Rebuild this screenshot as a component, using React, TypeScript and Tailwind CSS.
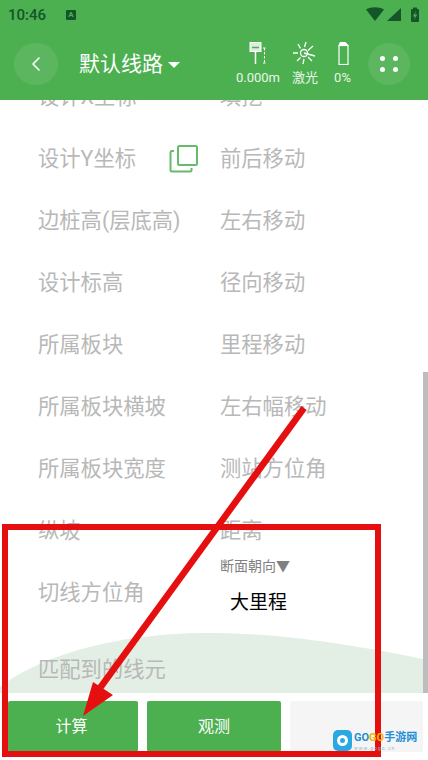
import React from 'react';
import { ChevronLeft } from 'lucide-react';

const rows = [
  { left: '设计X坐标', right: '填挖' },
  { left: '设计Y坐标', right: '前后移动', copy: true },
  { left: '边桩高(层底高)', right: '左右移动' },
  { left: '设计标高', right: '径向移动' },
  { left: '所属板块', right: '里程移动' },
  { left: '所属板块横坡', right: '左右幅移动' },
  { left: '所属板块宽度', right: '测站方位角' },
  { left: '纵坡', right: '距离' },
];

const StatusBar = () => (
  <div className="flex h-[30px] items-center pl-2 pr-2 text-[#14562a]">
    <span className="w-[58px] text-[15px] font-medium">10:46</span>
    <span className="flex h-[10px] w-[10px] items-center justify-center rounded-[1px] bg-[#14562a] text-[8px] font-bold leading-none text-[#4caf50]">A</span>
    <svg className="ml-auto" width="54" height="16" viewBox="0 0 54 16" fill="#14562a">
      <path d="M0 2.5C5 -0.5 13 -0.5 18 2.5L9 14Z" />
      <path d="M21 14L35 1V14Z" />
      <rect x="45" y="2" width="8" height="13" rx="1" />
      <rect x="47" y="0.5" width="4" height="2" />
      <path d="M50 4L46.8 9.5H49L48 13L51.2 7.5H49Z" fill="#4caf50" />
    </svg>
  </div>
);

const StationIcon = () => (
  <svg width="30" height="24" viewBox="0 0 30 24" fill="none" stroke="#fff">
    <rect x="7" y="1.500" width="11" height="9" fill="#dcefdc" strokeWidth="1" />
    <path d="M9 6.500H16" stroke="#4caf50" strokeWidth="1.500" />
    <path d="M12.500 10V23" strokeWidth="1.500" />
    <path d="M20 7H23M21.500 7V22M20 22H23" strokeWidth="1" strokeDasharray="2.500 1.500" />
  </svg>
);

const LaserIcon = () => (
  <svg width="24" height="24" viewBox="0 0 24 24" fill="none" stroke="#fff" strokeWidth="1.300">
    <circle cx="11" cy="12" r="3.500" />
    <path d="M11 12L22 15M13 1L11.500 6M5 3L7.500 7.500M0 12H5M4 20L7.500 16.500M10 23L11 18M20 5L15 9.500M15 16L19 20" />
  </svg>
);

const BatteryIcon = () => (
  <svg width="12" height="24" viewBox="0 0 12 24" fill="none" stroke="#fff">
    <path d="M3 1.500H8.500L11 4.500H2Z" fill="#fff" strokeWidth="1" />
    <rect x="2" y="4.500" width="9" height="19" strokeWidth="1.200" />
  </svg>
);

const Stat = ({ icon, label, w }: { icon: React.ReactNode; label: string; w: string }) => (
  <div className={`-mt-[2px] flex flex-col items-center ${w}`}>
    <div className="flex h-[24px] items-center">{icon}</div>
    <span className="mt-[5px] whitespace-nowrap text-[13px] leading-[16px] text-[#eaf6ea]">{label}</span>
  </div>
);

const Toolbar = () => (
  <div className="flex h-[70px] items-start pl-[14px] pr-[18px] pt-[13px] text-white">
    <button className="flex h-[42px] w-[44px] items-center justify-center rounded-full bg-[#5bb65f]">
      <ChevronLeft size={24} strokeWidth={1.600} color="#fff" />
    </button>
    <span className="ml-[21px] mt-[5px] text-[21px] leading-[32px]">默认线路</span>
    <span className="ml-[5px] mt-[19px] h-0 w-0 border-x-[6px] border-t-[6px] border-x-transparent border-t-white" />
    <div className="ml-auto flex items-start">
      <Stat w="w-[46px]" icon={<StationIcon />} label="0.000m" />
      <Stat w="w-[48px]" icon={<LaserIcon />} label="激光" />
      <Stat w="w-[27px]" icon={<BatteryIcon />} label="0%" />
      <button className="ml-[12px] grid h-[42px] w-[42px] grid-cols-[5px_5px] content-center justify-center gap-x-[8px] gap-y-[6px] rounded-full bg-[#5bb65f]">
        <span className="h-[5px] w-[5px] rounded-full bg-white" />
        <span className="h-[5px] w-[5px] rounded-full bg-white" />
        <span className="h-[5px] w-[5px] rounded-full bg-white" />
        <span className="h-[5px] w-[5px] rounded-full bg-white" />
      </button>
    </div>
  </div>
);

const CopyIcon = () => (
  <svg width="30" height="30" viewBox="0 0 30 30" fill="none" stroke="#66bb6a" strokeWidth="2">
    <rect x="9" y="2" width="19" height="19" rx="1.500" />
    <path d="M5 7H3C2 7 1.500 7.500 1.500 8.500V26C1.500 27 2 27.500 3 27.500H21C22 27.500 22.500 27 22.500 26V24" />
  </svg>
);

const Row = ({ left, right, copy }: { left: string; right: string; copy?: boolean }) => (
  <div className="flex h-[62px] items-center text-[21.300px] text-[#b8b8b8]">
    <div className="relative flex w-[182px] items-center justify-between pr-[21px]">
      <span className="whitespace-nowrap">{left}</span>
      {copy && <CopyIcon />}
    </div>
    <span>{right}</span>
  </div>
);

const Annotation = () => (
  <svg className="pointer-events-none absolute inset-0" width="428" height="760" viewBox="0 0 428 760" fill="none">
    <rect x="5" y="527" width="373" height="227" stroke="#e60f0f" strokeWidth="6" />
    <path d="M304 408L100 688" stroke="#e60f0f" strokeWidth="6.500" />
    <path d="M83 716L93 682L113 695Z" fill="#e60f0f" />
  </svg>
);

const Watermark = () => (
  <div className="absolute left-[333px] top-[730px] flex items-center gap-[2px]">
    <div className="flex h-[21px] w-[19px] items-center justify-center rounded-[5px] bg-[#29a9e1]">
      <span className="h-[11px] w-[11px] rounded-full border-[3px] border-white" />
    </div>
    <div className="flex flex-col">
      <span className="whitespace-nowrap text-[11px] font-bold leading-[14px] text-[#1f8fd6]">
        GO<span className="text-[#f4b400]">GO</span>手游网
      </span>
      <span className="text-[5px] leading-[6px] tracking-[1px] text-[#9ab8c9]">www.gogo.cn</span>
    </div>
  </div>
);

export default function App() {
  return (
    <div
      className="relative flex h-[760px] w-[428px] flex-col overflow-hidden bg-white"
      style={{ fontFamily: '"Roboto", "Noto Sans CJK SC", sans-serif' }}
    >
      <header className="z-10 h-[100px] shrink-0 bg-[#4caf50]">
        <StatusBar />
        <Toolbar />
      </header>

      <main className="relative h-[593px] shrink-0 overflow-hidden">
        <svg className="absolute bottom-0 left-0" width="428" height="60" viewBox="0 0 428 60" fill="#e3efe4">
          <path d="M0 54C30 30 100 0 210 0C290 0 370 15 428 27V60H0Z" />
        </svg>
        <div className="absolute bottom-0 right-0 h-[321px] w-[5px] bg-[#bdbdbd]" />

        <div className="relative -mt-[34px] pl-[38px]">
          {rows.map((r) => (
            <Row key={r.left} {...r} />
          ))}
          <div className="flex h-[62px] items-center text-[21.300px] text-[#b8b8b8]">
            <span className="w-[182px]">切线方位角</span>
            <div className="-mt-[13px] flex flex-col">
              <span className="text-[14px] leading-[18px] text-[#808080]">断面朝向▼</span>
              <span className="ml-[10px] mt-[15px] text-[19px] leading-[26px] text-black">大里程</span>
            </div>
          </div>
          <div className="mt-[15px] flex h-[62px] items-center text-[21.300px] text-[#b8b8b8]">匹配到的线元</div>
        </div>
      </main>

      <footer className="flex flex-1 gap-[9px] pb-[8px] pl-[8px] pr-[5px] pt-[8px] text-[16px] text-white">
        <button className="w-[130px] rounded-[2px] bg-[#4caf50] pr-[3px]">计算</button>
        <button className="w-[134px] rounded-[2px] bg-[#4caf50]">观测</button>
        <div className="flex-1 rounded-[2px] bg-[#f5f5f5]" />
      </footer>

      <Annotation />
      <Watermark />
    </div>
  );
}
